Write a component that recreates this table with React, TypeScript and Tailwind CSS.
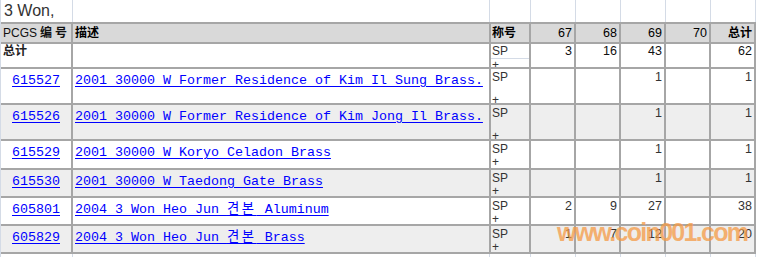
const sans = "font-['Liberation_Sans','Noto_Sans_CJK_SC',sans-serif]"
const mono = "font-['Liberation_Mono','Noto_Sans_CJK_KR',monospace]"

interface Row {
    id: string
    desc: string
    counts: string[] // 67, 68, 69, 70, total
    tall?: boolean
}

const rows: Row[] = [
    { id: '615527', desc: '2001 30000 W Former Residence of Kim Il Sung Brass.', counts: ['', '', '1', '', '1'], tall: true },
    { id: '615526', desc: '2001 30000 W Former Residence of Kim Jong Il Brass.', counts: ['', '', '1', '', '1'], tall: true },
    { id: '615529', desc: '2001 30000 W Koryo Celadon Brass', counts: ['', '', '1', '', '1'] },
    { id: '615530', desc: '2001 30000 W Taedong Gate Brass', counts: ['', '', '1', '', '1'] },
    { id: '605801', desc: '2004 3 Won Heo Jun 견본 Aluminum', counts: ['2', '9', '27', '', '38'] },
    { id: '605829', desc: '2004 3 Won Heo Jun 견본 Brass', counts: ['1', '7', '12', '', '20'] },
]

const totals = ['3', '16', '43', '', '62']

// light sheet gridlines above / below the table
function Strip({ height, children }: { height: string; children?: React.ReactNode }) {
    const line = 'border-r border-[#d4dbe6] shrink-0'
    return (
        <div className={`flex ${height}`}>
            <div className={`${line} w-[72px] overflow-hidden`}>{children}</div>
            <div className={`${line} w-[417px]`} />
            <div className={`${line} w-[41px]`} />
            <div className={`${line} w-[45px]`} />
            <div className={`${line} w-[45px]`} />
            <div className={`${line} w-[45px]`} />
            <div className={`${line} w-[45px]`} />
            <div className={`${line} w-[45px]`} />
        </div>
    )
}

function Desc({ text }: { text: string }) {
    // hangul glyphs are double width in the source font
    const parts = text.split(/([\uAC00-\uD7AF]+)/)
    return (
        <a href="#" className="text-[#0000ff] underline underline-offset-[2px]">
            {parts.map((p, i) =>
                /[\uAC00-\uD7AF]/.test(p) ? (
                    <span key={i} className="tracking-[2.6px]">{p}</span>
                ) : (
                    <span key={i}>{p}</span>
                )
            )}
        </a>
    )
}

export default function App() {
    return (
        <div className={`w-[757px] h-[257px] overflow-hidden bg-white border-l border-[#d4dbe6] relative ${sans}`}>
            <Strip height="h-[22px]">
                <div className="pl-[3px] text-[16px] leading-[22px] text-[#333] whitespace-nowrap">3 Won,</div>
            </Strip>

            <div className="grid grid-cols-[70px_416px_38px_43px_43px_43px_43px_43px] grid-rows-[18px_23px_34px_34px_27px_26px_26px_26px] gap-[2px] pt-[2px] pr-[2px] pb-[2px] bg-[#a6a6a6] w-[755px]">
                {/* header */}
                <div className="bg-[#d9d9d9] flex items-center pl-[2px] text-[12px] text-[#111] whitespace-nowrap">
                    PCGS <span className="font-bold ml-[3px] tracking-[3px]">编号</span>
                </div>
                <div className="bg-[#d9d9d9] flex items-center pl-[2px] text-[12px] font-bold text-black">描述</div>
                <div className="bg-[#d9d9d9] flex items-center pl-[1px] text-[12px] font-bold text-black">称号</div>
                {['67', '68', '69', '70'].map(h => (
                    <div key={h} className="bg-[#d9d9d9] flex items-center justify-end pr-[2px] text-[12.5px] text-black">{h}</div>
                ))}
                <div className="bg-[#d9d9d9] flex items-center justify-end pr-[2px] text-[12px] font-bold text-black">总计</div>

                {/* totals */}
                <div className="bg-white pl-[2px] pt-[1px] text-[12px] leading-[13px] font-bold text-[#222]">总计</div>
                <div className="bg-white" />
                <div className="bg-white overflow-hidden pt-[1px] text-[12px] leading-[13px] text-[#333]">
                    <div className="pl-[1px] border-b border-[#d4dbe6]">SP</div>
                    <div className="pl-[1px]">+</div>
                </div>
                {totals.map((n, i) => (
                    <div key={i} className="bg-white pt-[1px] pr-[2px] text-right text-[12.5px] leading-[13px] text-[#111]">{n}</div>
                ))}

                {rows.map((r, idx) => {
                    const bg = idx % 2 === 1 ? 'bg-[#eeeeee]' : 'bg-white'
                    return [
                        <div key={r.id + 'a'} className={`${bg} ${mono} text-[13.33px] leading-[16px] pt-[4px] text-center`}>
                            <a href="#" className="text-[#0000ff] underline underline-offset-[2px]">{r.id}</a>
                        </div>,
                        <div key={r.id + 'b'} className={`${bg} ${mono} text-[13.33px] leading-[16px] pt-[4px] pl-[2px] whitespace-nowrap overflow-hidden`}>
                            <Desc text={r.desc} />
                        </div>,
                        <div key={r.id + 'c'} className={`${bg} overflow-hidden pt-[2px] pl-[1px] text-[12px] leading-[13px] text-[#333]`}>
                            <div>SP</div>
                            <div className={r.tall ? 'mt-[10px]' : ''}>+</div>
                        </div>,
                        ...r.counts.map((n, i) => (
                            <div key={r.id + i} className={`${bg} pt-[2px] pr-[2px] text-right text-[12.5px] leading-[13px] text-[#333]`}>{n}</div>
                        )),
                    ]
                })}
            </div>

            <Strip height="h-[3px]" />

            {/* site watermark baked into the capture */}
            <div className="absolute left-[556px] top-[220px] text-[25px] leading-[25px] font-bold tracking-[-1.7px] text-[#f59a45] opacity-75 pointer-events-none whitespace-nowrap">
                www.coin001.com
            </div>
        </div>
    )
}
